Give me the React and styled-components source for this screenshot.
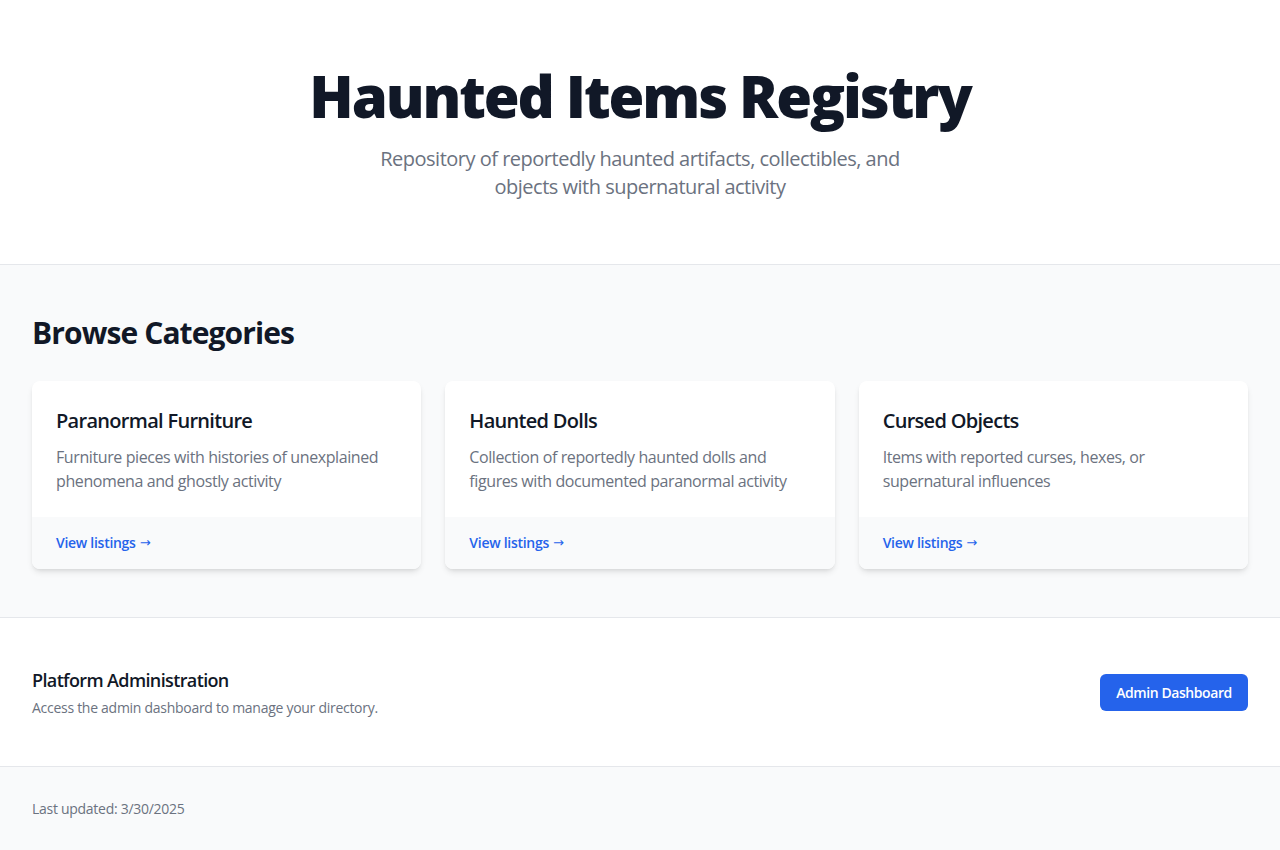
import React from "react";
import styled, { createGlobalStyle } from "styled-components";

const GlobalStyle = createGlobalStyle`
  * { box-sizing: border-box; }
  html, body { margin: 0; padding: 0; }
  body {
    font-family: "Open Sans", "Noto Sans", sans-serif;
    background: #f9fafb;
    color: #111827;
    -webkit-font-smoothing: antialiased;
  }
`;

const Page = styled.div`
  min-height: 850px;
  display: flex;
  flex-direction: column;
  background: #f9fafb;
`;

const Hero = styled.header`
  background: #ffffff;
  border-bottom: 1px solid #e5e7eb;
  padding: 63px 32px 63px;
  display: flex;
  flex-direction: column;
  align-items: center;
  text-align: center;
`;

const Title = styled.h1`
  margin: 0;
  font-size: 58px;
  line-height: 66px;
  font-weight: 800;
  letter-spacing: -0.036em;
  color: #111827;
`;

const Subtitle = styled.p`
  margin: 16px 0 0;
  max-width: 576px;
  font-size: 20px;
  line-height: 28px;
  color: #6b7280;
  letter-spacing: -0.025em;
`;

const Section = styled.section`
  padding: 48px 32px;
  background: ${(p) => (p.$white ? "#ffffff" : "#f9fafb")};
  border-bottom: ${(p) => (p.$bordered ? "1px solid #e5e7eb" : "none")};
`;

const SectionTitle = styled.h2`
  margin: 0 0 28px;
  font-size: 30px;
  line-height: 40px;
  font-weight: 700;
  color: #111827;
  letter-spacing: -0.03em;
`;

const Grid = styled.div`
  display: grid;
  grid-template-columns: repeat(3, 1fr);
  gap: 24px;
`;

const Card = styled.article`
  background: #ffffff;
  border-radius: 8px;
  overflow: hidden;
  box-shadow: 0 4px 6px -1px rgba(0, 0, 0, 0.1), 0 2px 4px -2px rgba(0, 0, 0, 0.1);
  display: flex;
  flex-direction: column;
`;

const CardBody = styled.div`
  padding: 26px 24px 24px;
  flex: 1;
`;

const CardTitle = styled.h3`
  margin: 0;
  font-size: 20px;
  line-height: 28px;
  font-weight: 600;
  color: #111827;
  letter-spacing: -0.035em;
`;

const CardText = styled.p`
  margin: 10px 0 0;
  font-size: 16px;
  line-height: 24px;
  color: #6b7280;
  letter-spacing: -0.025em;
`;

const CardFooter = styled.div`
  background: #f9fafb;
  padding: 16px 24px;
`;

const Link = styled.a`
  display: flex;
  align-items: center;
  gap: 4px;
  height: 20px;
  font-size: 14px;
  line-height: 20px;
  font-weight: 600;
  color: #2563eb;
  text-decoration: none;
  letter-spacing: -0.02em;
`;

const Arrow = styled.span`
  font-family: "DejaVu Sans", sans-serif;
  font-weight: 400;
  font-size: 13px;
  line-height: 20px;
`;

const AdminRow = styled.div`
  display: flex;
  align-items: center;
  justify-content: space-between;
`;

const AdminTitle = styled.h3`
  margin: 0;
  font-size: 18px;
  line-height: 28px;
  font-weight: 600;
  color: #111827;
  letter-spacing: -0.035em;
`;

const AdminText = styled.p`
  margin: 4px 0 0;
  font-size: 14px;
  line-height: 20px;
  color: #6b7280;
  letter-spacing: -0.02em;
`;

const Button = styled.button`
  font-family: inherit;
  border: none;
  background: #2563eb;
  color: #ffffff;
  font-size: 14px;
  line-height: 21px;
  font-weight: 600;
  padding: 8px 16px;
  width: 148px;
  white-space: nowrap;
  border-radius: 6px;
  letter-spacing: -0.03em;
  cursor: pointer;
`;

const Footer = styled.footer`
  flex: 1;
  background: #f9fafb;
  padding: 32px;
  font-size: 14px;
  line-height: 20px;
  color: #6b7280;
  letter-spacing: -0.02em;
`;

const categories = [
  {
    title: "Paranormal Furniture",
    text: "Furniture pieces with histories of unexplained phenomena and ghostly activity",
  },
  {
    title: "Haunted Dolls",
    text: "Collection of reportedly haunted dolls and figures with documented paranormal activity",
  },
  {
    title: "Cursed Objects",
    text: "Items with reported curses, hexes, or supernatural influences",
  },
];

export default function App() {
  return (
    <Page>
      <GlobalStyle />
      <Hero>
        <Title>Haunted Items Registry</Title>
        <Subtitle>
          Repository of reportedly haunted artifacts, collectibles, and objects with supernatural activity
        </Subtitle>
      </Hero>
      <Section $bordered>
        <SectionTitle>Browse Categories</SectionTitle>
        <Grid>
          {categories.map((c) => (
            <Card key={c.title}>
              <CardBody>
                <CardTitle>{c.title}</CardTitle>
                <CardText>{c.text}</CardText>
              </CardBody>
              <CardFooter>
                <Link href="#">
                  View listings <Arrow>→</Arrow>
                </Link>
              </CardFooter>
            </Card>
          ))}
        </Grid>
      </Section>
      <Section $white $bordered>
        <AdminRow>
          <div>
            <AdminTitle>Platform Administration</AdminTitle>
            <AdminText>Access the admin dashboard to manage your directory.</AdminText>
          </div>
          <Button>Admin Dashboard</Button>
        </AdminRow>
      </Section>
      <Footer>Last updated: 3/30/2025</Footer>
    </Page>
  );
}
